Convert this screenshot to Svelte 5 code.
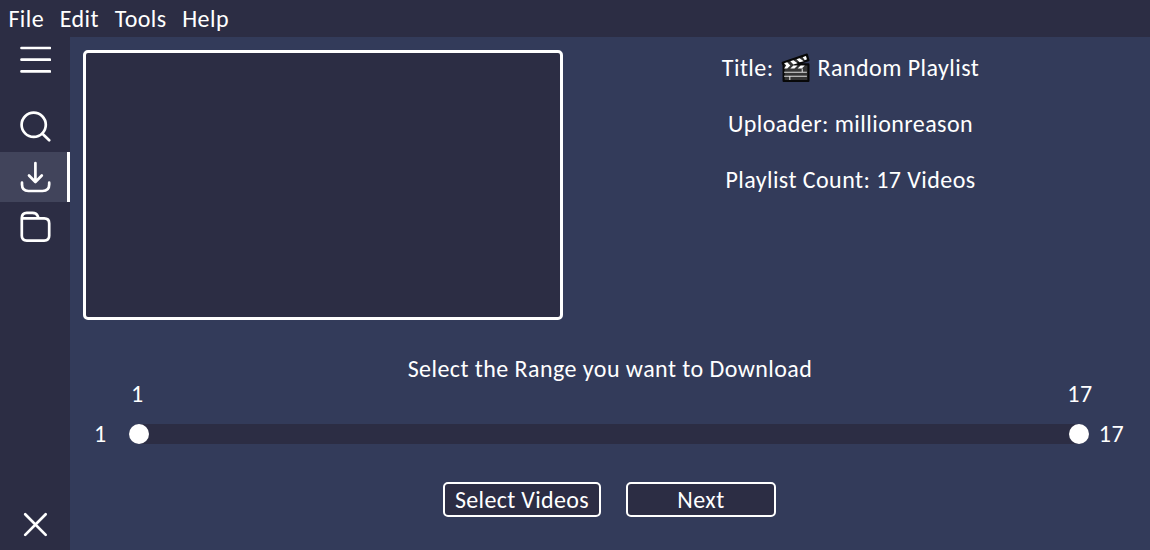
<script>
  const menus = ['File', 'Edit', 'Tools', 'Help'];
  const min = 1;
  const max = 17;
</script>

<div class="window">
  <nav class="menubar">
    {#each menus as m}<span class={m.toLowerCase()}>{m}</span>{/each}
  </nav>
  <div class="body">
    <aside>
      <div class="item menu"><svg viewBox="0 0 32 32"><path d="M2.5 4H31M2.5 15.7H31M2.5 27.4H31" /></svg></div>
      <div class="item"><svg viewBox="0 0 32 32"><circle cx="14.7" cy="13.8" r="12.1" /><path d="M23.5 22.7L30.2 29.2" /></svg></div>
      <div class="item active"><svg viewBox="0 0 32 32"><path d="M16.4 2V20.5M10 14.5L16.4 21L22.8 14.5M3 21.7V23.5Q3 30 9.4 30H23.5Q30.2 30 30.2 23.5V21.7" /></svg></div>
      <div class="item"><svg viewBox="0 0 32 32"><path d="M2.8 7V24.8Q2.8 29.6 7.8 29.6H25.2Q30.2 29.6 30.2 24.8V12.4Q30.2 7.4 25.2 7.4H3.2M2.8 7Q2.8 1.8 7.8 1.8H13.5Q17.5 1.8 18.7 5L19.5 7.2" /></svg></div>
      <div class="item close"><svg viewBox="0 0 32 32"><path d="M6.2 5.2L26.7 25.9M26.7 5.2L6.2 25.9" /></svg></div>
    </aside>
    <main>
      <section class="info">
        <div class="thumb"></div>
        <div class="meta">
          <p class="title"><span>Title:</span>
            <svg viewBox="0 0 28 28" aria-hidden="true">
              <path d="M1.5 9.5L25 1.5L26.5 7L13 11H26.5V27H2.5V12Z" fill="#353535" stroke="#080808" stroke-width="2" stroke-linejoin="round" />
              <path d="M3 10L6 9L9 12L6 13ZM9 8L12 7L16 10L12 11ZM15 6L18 5L22 8L18 9ZM21 4L24 3L25 6L23 7ZM5 12H9L6 15H3ZM12 12H16L13 15H9ZM19 12H23L20 15H16Z" fill="#fff" />
              <path d="M3 18.5H25M3 22.5H25M20.5 15V18M8.5 23V26" stroke="#ddd" fill="none" />
            </svg>
            <span>Random Playlist</span></p>
          <p class="uploader">Uploader: millionreason</p>
          <p class="count">Playlist Count: 17 Videos</p>
        </div>
      </section>
      <h1>Select the Range you want to Download</h1>
      <div class="values"><span>{min}</span><span>{max}</span></div>
      <div class="range">
        <span class="low">{min}</span>
        <div class="track"><i></i><i></i></div>
        <span class="high">{max}</span>
      </div>
      <div class="actions"><button class="select"><span>Select Videos</span></button><button class="next"><span>Next</span></button></div>
    </main>
  </div>
</div>

<style>
  :global(body) { margin: 0; overflow: hidden; }
  .window { width: 1150px; height: 550px; display: flex; flex-direction: column; box-sizing: border-box; background: #2c2d44; color: #fff; font: 24px/28px Carlito, Calibri, Lato, sans-serif; letter-spacing: 0.44px; }
  .menubar { height: 37px; padding-left: 8.4px; display: flex; gap: 15.6px; line-height: 38px; flex: none; }
  .body { display: flex; flex: 1; min-height: 0; }
  aside { width: 70px; display: flex; flex-direction: column; }
  .item { height: 50px; box-sizing: border-box; display: flex; align-items: center; padding-left: 19px; }
  .item svg { width: 32px; height: 32px; fill: none; stroke: #fff; stroke-width: 2.7; stroke-linecap: round; stroke-linejoin: round; }
  .menu { height: 45px; margin-bottom: 20px; }
  .active { background: #41445b; border-right: 3px solid #fff; }
  .close { margin-top: auto; }
  main { flex: 1; display: flex; flex-direction: column; background: #333b5a; }
  .info { display: flex; height: 270px; padding: 13px 12px 0 13px; }
  .thumb { width: 480px; height: 270px; box-sizing: border-box; flex: none; border: 3px solid #fff; border-radius: 5px; background: #2c2d44; }
  .meta { flex: 1; display: flex; flex-direction: column; align-items: center; gap: 28px; padding-top: 4px; }
  p { margin: 0; white-space: nowrap; }
  .title { display: flex; align-items: center; gap: 8px; }
  .title svg { width: 29px; height: 29px; margin: -1px 0 0 -1px; }
  h1 { margin: 35px 0 0; text-align: center; font: inherit; }
  .values { display: flex; justify-content: space-between; height: 28px; margin-top: -3px; padding: 0 57.5px 0 61px; }
  .range { display: flex; align-items: center; height: 28px; margin-top: 12px; padding: 0 26px 0 24px; }
  .low { width: 35px; }
  .track { flex: 1; height: 20px; display: flex; justify-content: space-between; background: #2c2d44; border-radius: 10px; }
  .track i { width: 20px; height: 20px; border-radius: 50%; background: #fff; }
  .high { width: 35px; text-align: right; }
  .actions { display: flex; justify-content: center; gap: 25px; margin: 34px 1px 0 0; }
  button { width: 150px; height: 35px; padding: 0; border: 2px solid #fff; border-radius: 5px; background: #2c2d44; color: #fff; font: inherit; letter-spacing: inherit; }
  .select { width: 158px; letter-spacing: 0.34px; }
</style>
